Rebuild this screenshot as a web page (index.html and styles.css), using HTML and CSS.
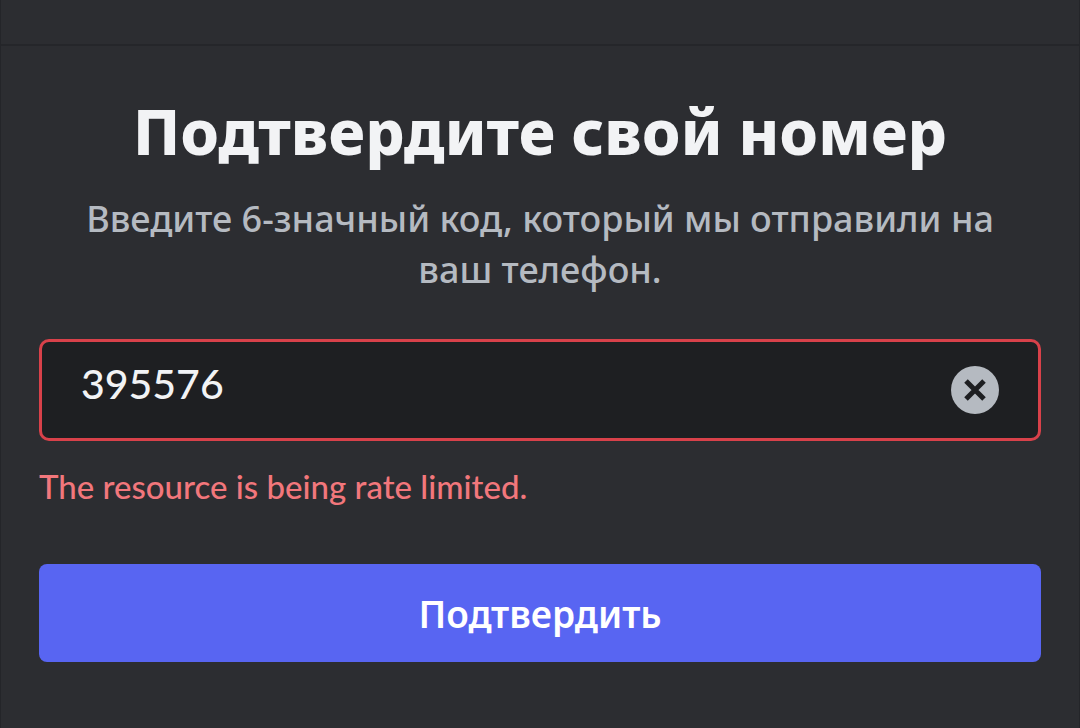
FILE: index.html
```html
<!DOCTYPE html>
<html lang="ru">
<head>
    <meta charset="UTF-8">
    <meta name="viewport" content="width=device-width, initial-scale=1.0">
    <title>Подтвердите свой номер</title>
    <link rel="stylesheet" href="styles.css">
</head>
<body>
    <header class="topbar"></header>
    <main class="container">
        <h1>Подтвердите свой номер</h1>
        <form id="codeForm">
            <label class="hint" for="code">Введите 6-значный код, который мы отправили на ваш телефон.</label>
            <div class="field">
                <input type="text" id="code" name="code" value="395576" inputmode="numeric" maxlength="6" aria-describedby="error">
                <button type="button" class="clear" aria-label="Очистить">
                    <svg width="48" height="48" viewBox="0 0 48 48" aria-hidden="true">
                        <circle cx="24" cy="24" r="24" fill="#b5bac1"/>
                        <path d="M15 15l18 18M33 15l-18 18" stroke="#1e1f22" stroke-width="5"/>
                    </svg>
                </button>
            </div>
            <p class="error" id="error">The resource is being rate limited.</p>
            <button type="submit" class="submit">Подтвердить</button>
        </form>
    </main>
</body>
</html>
```

FILE: styles.css
```css
* { box-sizing: border-box; }
body {
    margin: 0;
    min-height: 100vh;
    border: solid #242529;
    border-width: 0 1px;
    font-family: "Noto Sans", sans-serif;
    background-color: #2c2d31;
    color: #f2f3f5;
}
.topbar { height: 46px; border-bottom: 2px solid #25262a; }
.container { padding: 45px 38px; }
h1 { margin: 0; font-size: 62px; line-height: 80px; font-weight: 800; text-align: center; }
.hint {
    display: block;
    margin: 22px 0 44px;
    padding: 0 32px;
    font-size: 36px;
    line-height: 51px;
    font-weight: 500;
    text-align: center;
    color: #b5bac1;
}
.field {
    display: flex;
    align-items: center;
    height: 102px;
    padding: 0 39px;
    background-color: #1e1f22;
    border: 3px solid #d8414a;
    border-radius: 10px;
}
.field input {
    flex: 1;
    min-width: 0;
    padding: 0 0 14px;
    border: none;
    outline: none;
    background: none;
    color: #f2f3f5;
    font-family: Lato, sans-serif;
    font-size: 41px;
    font-weight: 500;
}
.clear { display: flex; padding: 0; border: none; background: none; cursor: pointer; }
.error {
    margin: 23px 0 56px;
    font-family: Lato, sans-serif;
    font-size: 33px;
    line-height: 44px;
    font-weight: 500;
    color: #f2777c;
}
.submit {
    width: 100%;
    height: 98px;
    border: none;
    border-radius: 8px;
    background-color: #5865f2;
    color: #fff;
    font-family: inherit;
    font-size: 37px;
    font-weight: 600;
    cursor: pointer;
}
```
